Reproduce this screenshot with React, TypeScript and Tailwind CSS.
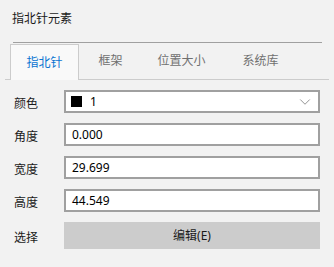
import { ChevronDown } from 'lucide-react';

const tabs = [
  { label: '指北针', width: 'w-[69px]', active: true },
  { label: '框架', width: 'w-[63px]', active: false },
  { label: '位置大小', width: 'w-[79px]', active: false },
  { label: '系统库', width: 'w-[79px]', active: false },
];

const fields = [
  { label: '角度', value: '0.000' },
  { label: '宽度', value: '29.699' },
  { label: '高度', value: '44.549' },
];

function Row({ label, children }: { label: string; children: React.ReactNode }) {
  return (
    <div className="flex items-center">
      <div className="w-[64px] pl-[14px] pt-[5px] leading-[16px] text-[#1a1a1a]">{label}</div>
      {children}
    </div>
  );
}

export default function App() {
  return (
    <div
      className="h-[267px] w-[334px] overflow-hidden bg-[#f2f2f2] text-[12px]"
      style={{ fontFamily: '"Noto Sans", "Noto Sans CJK SC", sans-serif' }}
    >
      <div className="pl-[12px] pt-[11px] leading-[16px] text-[#1a1a1a]">指北针元素</div>

      {/* tab strip */}
      <div className="mx-[5px] mt-[15px]">
        <div className="ml-[8px] h-px w-[309px] bg-[#a0a0a0]" />
        <div className="flex h-[37px] items-end border-b border-[#cccccc]">
          <div className="w-[5px]" />
          {tabs.map((t) =>
            t.active ? (
              <div
                key={t.label}
                className={`${t.width} -mb-px flex h-[36px] items-center justify-center border border-b-0 border-[#cccccc] bg-[#f9f9f9] text-[#0a74d1]`}
              >
                {t.label}
              </div>
            ) : (
              <div
                key={t.label}
                className={`${t.width} flex h-[36px] items-center justify-center text-[#707070]`}
              >
                {t.label}
              </div>
            )
          )}
        </div>
      </div>

      <div className="mt-[10px] flex flex-col gap-[10px]">
        <Row label="颜色">
          <div className="flex h-[23px] w-[256px] items-center border-2 border-[#a0a0a0] bg-white">
            <div className="ml-[5px] h-[11px] w-[11px] bg-black" />
            <div className="ml-[8px] flex-1 leading-[16px] text-black">1</div>
            <ChevronDown className="mr-[4px] text-[#606060]" size={18} strokeWidth={0.9} />
          </div>
        </Row>
        {fields.map((f) => (
          <Row key={f.label} label={f.label}>
            <div className="flex h-[23px] w-[256px] items-center border-2 border-[#a0a0a0] bg-white pl-[6px] leading-[16px] text-black">
              {f.value}
            </div>
          </Row>
        ))}
        <Row label="选择">
          <div className="flex h-[27px] w-[256px] items-center justify-center bg-[#cccccc] leading-[16px] text-[#1a1a1a]">
            编辑(E)
          </div>
        </Row>
      </div>
    </div>
  );
}
